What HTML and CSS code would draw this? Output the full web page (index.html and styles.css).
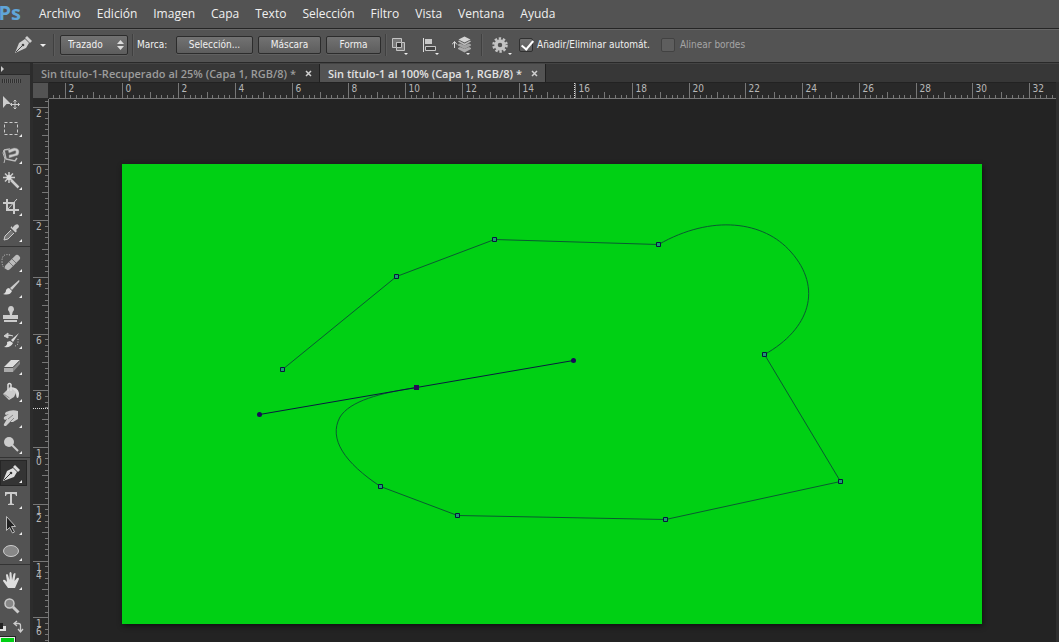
FILE: index.html
```html
<!DOCTYPE html>
<html lang="es">
<head>
<meta charset="utf-8">
<title>Sin título-1 al 100%</title>
<link rel="stylesheet" href="styles.css">
</head>
<body>
<header class="menubar">
  <div class="logo">Ps</div>
  <nav class="menu">
    <button>Archivo</button><button>Edición</button><button>Imagen</button><button>Capa</button><button>Texto</button><button>Selección</button><button>Filtro</button><button>Vista</button><button>Ventana</button><button>Ayuda</button>
  </nav>
</header>

<div class="options">
  <button class="icon-btn preset" aria-label="Herramienta Pluma">
    <svg width="36" height="20" viewBox="0 0 36 20"><path d="M1 18 5 8 11 4 15 8 12 13Z" fill="#cfcfcf"/><path d="M11 3 13 1 18 6 16 8Z" fill="#cfcfcf"/><path d="M2 17 9 10" stroke="#444"/><circle cx="9" cy="10" r="1.3" fill="#444"/><path d="M26 9h6l-3 3z" fill="#eee"/></svg>
  </button>
  <span class="sep"></span>
  <div class="select-wrap">
    <select class="field" aria-label="Modo"><option>Trazado</option></select>
    <svg class="spin" width="7" height="10" viewBox="0 0 7 10"><path d="M0 4 3.500 0 7 4zM0 6h7L3.500 10z" fill="#ddd"/></svg>
  </div>
  <span class="sep close"></span>
  <span class="label">Marca:</span>
  <div class="make">
    <button class="field wide">Selección...</button>
    <button class="field mid">Máscara</button>
    <button class="field small">Forma</button>
  </div>
  <span class="sep close"></span>
  <div class="ops">
    <button class="icon-btn" aria-label="Operaciones de trazado"><svg width="20" height="20" viewBox="0 0 20 20"><path d="M2.500 3.500h9v9h-9z" fill="#777" stroke="#c4c4c4"/><path d="M6.500 7.500h8v8h-8z" fill="#777" stroke="#c4c4c4"/><path d="M6.500 7.500h5v5h-5z" fill="#333" stroke="#c4c4c4"/><path d="M14 18h4l-2 2z" fill="#eee"/></svg></button>
    <button class="icon-btn" aria-label="Alineación de trazado"><svg width="20" height="20" viewBox="0 0 20 20"><path d="M2.500 3v14" stroke="#ddd"/><path d="M4 4h7v5H4z" fill="#c8c8c8"/><path d="M4.500 11.500h10v4h-10z" fill="#444" stroke="#c8c8c8"/><path d="M14 18h4l-2 2z" fill="#eee"/></svg></button>
    <button class="icon-btn" aria-label="Disposición de trazado"><svg width="20" height="20" viewBox="0 0 20 20"><path d="M2.500 13V7M0 9.500l2.500-3L5 9.500" fill="none" stroke="#ddd"/><path d="m6 13 2-1 4.500 2 4.500-2 2 1v1l-6.500 3.500L6 14z" fill="#aaa"/><path d="m6 9.500 2-1 4.500 2 4.500-2 2 1v1L12.500 14 6 10.500z" fill="#a4a4a4"/><path d="m6 6.500 1-1 5.500 3 5.500-3 1 1L12.500 10.500z" fill="#bbb"/><path d="m6.500 4.500 6-3 6 3-6 3z" fill="#d4d4d4"/><path d="M14 18h4l-2 2z" fill="#eee"/></svg></button>
  </div>
  <span class="sep"></span>
  <button class="icon-btn gear" aria-label="Ajustes"><svg width="22" height="20" viewBox="0 0 22 20"><circle cx="9" cy="10" r="6.500" fill="none" stroke="#c4c4c4" stroke-width="2.500" stroke-dasharray="2.400 1.684"/><circle cx="9" cy="10" r="4" fill="none" stroke="#c4c4c4" stroke-width="3.500"/><path d="M17 18h4l-2 2z" fill="#eee"/></svg></button>
  <label class="check"><input type="checkbox" checked>Añadir/Eliminar automát.</label>
  <label class="check off"><input type="checkbox" disabled>Alinear bordes</label>
</div>

<div class="workspace">
  <aside class="tools">
    <div class="tools-head"><svg width="6" height="8" viewBox="0 0 6 8"><path d="M1 1 4 4 1 7z" fill="#ccc"/></svg></div>
    <div class="grip"></div>
    <div class="group">
      <button aria-label="Mover"><svg viewBox="0 0 26 26"><path d="M3 6v12l3.500-4H11z" fill="#ccc"/><path d="M15 10v9M10.500 14.500h9M13.500 11.500 15 10l1.500 1.500M13.500 17.500 15 19l1.500-1.500M12 13l-1.500 1.500L12 16M18 13l1.500 1.500L18 16" fill="none" stroke="#ccc"/></svg></button>
      <button aria-label="Marco rectangular"><svg viewBox="0 0 26 26"><rect x="4.500" y="6.500" width="13" height="12" fill="none" stroke="#ccc" stroke-dasharray="3 2"/><path class="more" d="M22 18v3h-3z"/></svg></button>
      <button aria-label="Lazo"><svg viewBox="0 0 26 26"><path d="M4 8 10 7M4 8l2 9M6 17l9 2 2-3" fill="none" stroke="#bbb" stroke-width="1.500"/><path d="M4 8 3 11l2 6-1 4" fill="none" stroke="#bbb"/><path d="m8 8 6-2q5 0 5 4t-4 4l-6 2v-3l5-1q2 0 2-2t-2-1l-5 2z" fill="#ccc" stroke="#888" stroke-width=".5"/><path class="more" d="M22 19v3h-3z"/></svg></button>
      <button aria-label="Varita mágica"><svg viewBox="0 0 26 26"><path d="M9 4v11M3 9.500h12M5 5.500l8 8M13 5.500l-8 8" stroke="#ccc" stroke-width="1.500"/><circle cx="9" cy="9.500" r="2.500" fill="#ddd"/><path d="m11 12 7.500 7.500" stroke="#ccc" stroke-width="2.500"/><path class="more" d="M22 19v3h-3z"/></svg></button>
      <button aria-label="Recortar"><svg viewBox="0 0 26 26"><path d="M7 5v11h12M3 9h11v11" fill="none" stroke="#ccc" stroke-width="2"/><path d="m8 15 9-10" stroke="#ccc"/><path class="more" d="M22 19v3h-3z"/></svg></button>
      <button aria-label="Cuentagotas"><svg viewBox="0 0 26 26"><path d="m12 8 3-3q4-2 4 2l-3 3 1 1-1.500 1.500-5-5L12 6z" fill="#ccc"/><path d="m11 10-6 6-1 4 4-1 6-6" fill="#777" stroke="#ccc"/><path class="more" d="M22 19v3h-3z"/></svg></button>
    </div>
    <div class="group">
      <button aria-label="Pincel corrector"><svg viewBox="0 0 26 26"><path d="M10 6Q2 4 2 12t6 8" fill="none" stroke="#ccc" stroke-dasharray="1 1.500"/><path d="M8 18 17 9" stroke="#bbb" stroke-width="6" stroke-linecap="round"/><path d="m9 13 4 4M12 10l4 4" stroke="#777"/><path class="more" d="M22 20v3h-3z"/></svg></button>
      <button aria-label="Pincel"><svg viewBox="0 0 26 26"><path d="M19 5q1 1 0 2l-7 8-2-2z" fill="#ccc"/><path d="m9 13 3 3q-2 5-9 3 3-1 3-4 1-2 3-2z" fill="#ddd"/><path class="more" d="M22 20v3h-3z"/></svg></button>
      <button aria-label="Tampón"><svg viewBox="0 0 26 26"><path d="M8 9q0-4 3-4t3 4q-2 2-2 5h6v4H3v-4h7q0-3-2-5zM4 19h13v2H4z" fill="#ccc"/><path class="more" d="M22 20v3h-3z"/></svg></button>
      <button aria-label="Pincel de historia"><svg viewBox="0 0 26 26"><path d="m19 6-6 9-2-2zM10 14l3 2q-2 5-9 4 4-2 3-5z" fill="#ddd"/><path d="M5 9q5-2 8 0M4 9l4-3v5z" fill="#ccc" stroke="#ccc"/><path d="M18 12v5l-4 3" fill="none" stroke="#ccc" stroke-dasharray="1 1.500"/><path class="more" d="M22 19v3h-3z"/></svg></button>
      <button aria-label="Borrador"><svg viewBox="0 0 26 26"><path d="m4 14 7-7h9l-7 7z" fill="#ddd"/><path d="M4 14h9v5H4z" fill="#aaa"/><path d="m13 14 7-7v4l-7 8z" fill="#888"/><path d="M4 14.500h9L20 7.500" fill="none" stroke="#555"/><path class="more" d="M22 19v3h-3z"/></svg></button>
      <button aria-label="Bote de pintura"><svg viewBox="0 0 26 26"><path d="m3 15 7-7 7 4-3 6-5 3z" fill="#ccc"/><path d="M8 12V5.500q1.500-2 3 0V12" fill="none" stroke="#ddd" stroke-width="1.500"/><path d="M10 8q8 0 9 6 0 5-1.500 5T16 13z" fill="#ddd"/><path d="m4.500 15.500 5 3.500" stroke="#888"/><path class="more" d="M22 20v3h-3z"/></svg></button>
      <button aria-label="Dedo"><svg viewBox="0 0 26 26"><path d="M6 7q6-3 12-1v8l-5 3-3 0-4 4q-3 0-2-2l3-5-2 1q-2-1-1-3l5-3-3 1q-2-1 0-3z" fill="#ccc"/><path d="m8 14 5-4M10 17l4-4" stroke="#888"/><path class="more" d="M22 20v3h-3z"/></svg></button>
      <button aria-label="Sobreexponer"><svg viewBox="0 0 26 26"><circle cx="9" cy="11" r="5" fill="#ccc"/><path d="m12 14 6 6" stroke="#ccc" stroke-width="2"/><path class="more" d="M22 20v3h-3z"/></svg></button>
    </div>
    <div class="group">
      <button class="active" aria-label="Pluma"><svg viewBox="0 0 26 26"><path d="m3 21 4-10 6-3 4 4-3 5z" fill="#ddd"/><path d="m13 7 2-2 5 5-2 2z" fill="#ddd"/><path d="m4 20 7-7" stroke="#333"/><circle cx="11" cy="13" r="1.300" fill="#333"/><path class="more" d="M22 20v3h-3z"/></svg></button>
      <button aria-label="Texto"><svg viewBox="0 0 26 26"><path d="M5 6h12v4h-1q0-2-2-2h-2v9q0 1 2 1v1H8v-1q2 0 2-1V8H8Q6 8 6 10H5z" fill="#ccc"/><path class="more" d="M22 20v3h-3z"/></svg></button>
      <button aria-label="Selección de trazado"><svg viewBox="0 0 26 26"><path d="M6.500 4.500v14l3-3 3 5.500 2-1-3-5.500h4z" fill="#222" stroke="#bbb"/><path class="more" d="M22 20v3h-3z"/></svg></button>
      <button aria-label="Elipse"><svg viewBox="0 0 26 26"><ellipse cx="11" cy="13" rx="7.500" ry="5.500" fill="#888" stroke="#ccc"/><path class="more" d="M22 20v3h-3z"/></svg></button>
    </div>
    <div class="group">
      <button aria-label="Mano"><svg viewBox="0 0 26 26"><path d="m8 21-5-7q0-2 2-1l2 2-1-7q1-2 2 0l1.500 5V6q1-2 2 0l.5 7 1.500-6q2-2 2 0l-1 7 2.500-3q2-1 2 1l-4 9z" fill="#ddd"/><path class="more" d="M22 20v3h-3z"/></svg></button>
      <button aria-label="Zoom"><svg viewBox="0 0 26 26"><circle cx="9.500" cy="10.500" r="4.500" fill="#888" stroke="#ccc" stroke-width="1.500"/><path d="m13 14 5.500 5.500" stroke="#ccc" stroke-width="3"/></svg></button>
    </div>
    <div class="colors">
      <button aria-label="Colores por defecto"><svg width="26" height="16" viewBox="0 0 26 16"><path d="M0 4h3v7H0z" fill="#222"/><path d="M3 7h3v5H0v-2h3z" fill="#ddd"/><path d="M15 4.500h3.500q2 0 2 2V12M17 2l-3 2.500L17 7M18 10l2.500 3 2.500-3" fill="none" stroke="#ccc" stroke-width="1.300"/></svg></button>
      <div class="swatch"></div>
    </div>
  </aside>

  <main class="document">
    <div class="tabs">
      <div class="tab"><span>Sin título-1-Recuperado al 25% (Capa 1, RGB/8) *</span><button aria-label="Cerrar"><svg width="7" height="7" viewBox="0 0 7 7"><path d="m1 1 5 5M6 1 1 6"/></svg></button></div>
      <div class="tab current"><span>Sin título-1 al 100% (Capa 1, RGB/8) *</span><button aria-label="Cerrar"><svg width="7" height="7" viewBox="0 0 7 7"><path d="m1 1 5 5M6 1 1 6"/></svg></button></div>
    </div>
    <div class="stage">
      <div class="corner"></div>
      <svg class="ruler-x" id="ruler-x"></svg>
      <svg class="ruler-y" id="ruler-y"></svg>
      <div class="canvas">
        <svg class="artboard" width="860" height="460" viewBox="122 164 860 460">
          <g fill="none" stroke="#0a5a32">
            <path d="M282.500 369.500 396.500 276.500 494.500 239.500 658.500 244.500C712 214 764 221 791 252C823 288 810 329 764.500 354.500L840.500 481.500 665.500 519.500 457.500 515.500 380.500 486.500C345 463 328 439 340 417C350 401 380 393 416.500 387.500"/>
            <path d="M259.500 414.500 416.500 387.500 573.500 360.500" stroke="#081c40"/>
          </g>
          <g fill="#1c9a72" stroke="#0a1740">
            <path d="M280.500 367.500h4v4h-4zM394.500 274.500h4v4h-4zM492.500 237.500h4v4h-4zM656.500 242.500h4v4h-4zM762.500 352.500h4v4h-4zM838.500 479.500h4v4h-4zM663.500 517.500h4v4h-4zM455.500 513.500h4v4h-4zM378.500 484.500h4v4h-4z"/>
          </g>
          <path d="M414 385h5v5h-5z" fill="#2a0a58"/>
          <circle cx="259.500" cy="414.500" r="2.500" fill="#1a0a58"/><circle cx="573.500" cy="360.500" r="2.500" fill="#1a0a58"/>
        </svg>
      </div>
    </div>
  </main>
</div>
<script src="rulers.js"></script>
</body>
</html>
```
FILE: styles.css
```css
* { box-sizing: border-box; }
body {
  margin: 0;
  height: 100vh;
  display: flex;
  flex-direction: column;
  overflow: hidden;
  background: #232323;
  color: #f0f0f0;
  font-family: "DejaVu Sans Condensed", "DejaVu Sans", sans-serif;
  font-size: 10px;
}
button, select, input { font: inherit; color: inherit; margin: 0; padding: 0; }
button { background: none; border: 0; }
svg { display: block; }

.menubar {
  display: flex;
  align-items: center;
  height: 29px;
  flex: none;
  background: #535353;
  border-bottom: 1px solid #252525;
}
.logo {
  display: flex;
  justify-content: flex-end;
  width: 21px;
  height: 28px;
  overflow: hidden;
  color: #60a5d8;
  font: bold 20px/26px "Open Sans", sans-serif;
}
.menu { display: flex; gap: 16px; padding-left: 18px; font: 12px/28px "Open Sans", sans-serif; }

.options {
  display: flex;
  align-items: center;
  height: 34px;
  flex: none;
  padding: 0 0 3px 14px;
  background: #535353;
  border-top: 1px solid #666;
  border-bottom: 1px solid #292929;
}
.sep { width: 2px; height: 22px; margin: 0 5px 0 3px; background: #404040; border-right: 1px solid #5c5c5c; }
.sep.close { margin: 0 3px 0 4px; }
.field {
  height: 18px;
  border: 1px solid #2c2c2c;
  border-radius: 2px;
  background: linear-gradient(#727272, #5d5d5d);
  box-shadow: 0 1px #606060;
  line-height: 14px;
}
.select-wrap { position: relative; }
.select-wrap select { display: block; width: 68px; height: 20px; padding-left: 7px; appearance: none; }
.spin { position: absolute; right: 4px; top: 5px; pointer-events: none; }
.label { width: 31px; white-space: nowrap; }
.make { display: flex; gap: 5px; margin-left: 8px; }
.wide { width: 77px; }
.mid { width: 63px; }
.small { width: 55px; }
.ops { display: flex; gap: 11px; padding-right: 6px; }
.gear { margin: 0 6px 0 3px; }
.check { display: flex; align-items: center; gap: 4px; margin-right: 11px; white-space: nowrap; }
.check input {
  appearance: none;
  position: relative;
  width: 14px;
  height: 14px;
  border: 1px solid #303030;
  border-radius: 2px;
  background: linear-gradient(#707070, #5c5c5c);
}
.check input:checked::after {
  content: "";
  position: absolute;
  left: 4px;
  top: -1px;
  width: 5px;
  height: 10px;
  border: solid #fff;
  border-width: 0 2px 2px 0;
  transform: rotate(40deg);
}
.check.off { color: #a5a5a5; gap: 5px; }
.check.off input { border-color: #424242; background: #5e5e5e; }

.workspace { display: flex; flex: 1; min-height: 0; }
.tools { width: 33px; flex: none; background: #535353; border-right: 3px solid #2c2c2c; overflow: hidden; }
.tools-head { height: 12px; padding-top: 2px; background: #393939; border-bottom: 1px solid #2a2a2a; }
.grip {
  height: 4px;
  margin: 4px 9px 7px 2px;
  background: repeating-linear-gradient(90deg, #303030 0 1px, #606060 1px 2px);
}
.group { border-bottom: 1px solid #333; margin-bottom: 2px; }
.group:nth-of-type(6) { border: 0; margin: 0; }
.group button { display: block; width: 27px; height: 26px; }
.group svg { width: 26px; height: 26px; }
.group .active { background: #343434; box-shadow: inset 0 0 0 1px #262626; }
.more { fill: #eee; }
.colors button { display: block; }
.swatch { width: 15px; height: 30px; margin-top: 2px; background: #00d014; border: 1px solid #eee; outline: 1px solid #222; }

.document { flex: 1; min-width: 0; display: flex; flex-direction: column; }
.tabs { display: flex; height: 19px; flex: none; background: #373737; font: 600 11px/19px "Open Sans", sans-serif; border-top: 1px solid #444; }
.tab { display: flex; align-items: center; gap: 9px; padding: 0 7px 0 8px; color: #9c9c9c; border-right: 1px solid #202020; white-space: nowrap; }
.tab svg { stroke: #d0d0d0; stroke-width: 1.5; }
.tab.current { background: #535353; color: #e2e2e2; }
.stage {
  flex: 1;
  min-height: 0;
  display: grid;
  grid-template: 17px 1fr / 16px 1fr;
  border-right: 3px solid #2e2e2e;
  background: #232323;
}
.corner { background: #535353; border: solid #2a2a2a; border-width: 1px 1px 1px 0; }
.ruler-x { width: 100%; height: 17px; background: #292929; border-bottom: 1px solid #777; border-top: 1px solid #222; }
.ruler-y { width: 16px; height: 100%; background: #292929; border-right: 1px solid #777; }
.tick { stroke: #777; shape-rendering: crispEdges; }
.cursor { stroke: #ddd; stroke-dasharray: 1 1; shape-rendering: crispEdges; }
.num { fill: #b8b8b8; font: 10px "DejaVu Sans Condensed", "DejaVu Sans", sans-serif; }
.canvas { overflow: hidden; padding: 65px 0 0 73px; }
.artboard { background: #00d014; box-shadow: 1px 2px 5px #111; }
```
FILE: rulers.js
```js
const NS = "http://www.w3.org/2000/svg";
const UNIT = 28.36;

function add(svg, tag, attrs, text) {
  const el = document.createElementNS(NS, tag);
  for (const key in attrs) el.setAttribute(key, attrs[key]);
  if (text) el.textContent = text;
  svg.appendChild(el);
}

// One tick every fifth of a unit, a number every two units.
function drawRuler(id, origin, vertical, cursor) {
  const svg = document.getElementById(id);
  const box = svg.getBoundingClientRect();
  const length = vertical ? box.height : box.width;
  svg.replaceChildren();
  const first = -Math.floor(origin / UNIT * 5);
  for (let i = first; origin + i * UNIT / 5 < length; i++) {
    const p = Math.floor(origin + i * UNIT / 5) + 0.5;
    const major = i % 10 === 0;
    const size = major ? 15 : i % 5 === 0 ? 6 : 3;
    add(svg, "line", vertical
      ? { x1: 15 - size, x2: 15, y1: p, y2: p, class: "tick" }
      : { x1: p, x2: p, y1: 15 - size, y2: 15, class: "tick" });
    if (!major) continue;
    const label = String(Math.abs(i / 5));
    if (vertical) {
      [...label].forEach((d, n) => add(svg, "text", { x: 3, y: p + 9 + n * 8, class: "num" }, d));
    } else {
      add(svg, "text", { x: p + 3, y: 9, class: "num" }, label);
    }
  }
  add(svg, "line", vertical
    ? { x1: 0, x2: 15, y1: cursor, y2: cursor, class: "cursor" }
    : { x1: cursor, x2: cursor, y1: 0, y2: 15, class: "cursor" });
}

function drawRulers() {
  drawRuler("ruler-x", 73, false, 525.5);
  drawRuler("ruler-y", 65, true, 309.5);
}

drawRulers();
window.addEventListener("resize", drawRulers);
```
